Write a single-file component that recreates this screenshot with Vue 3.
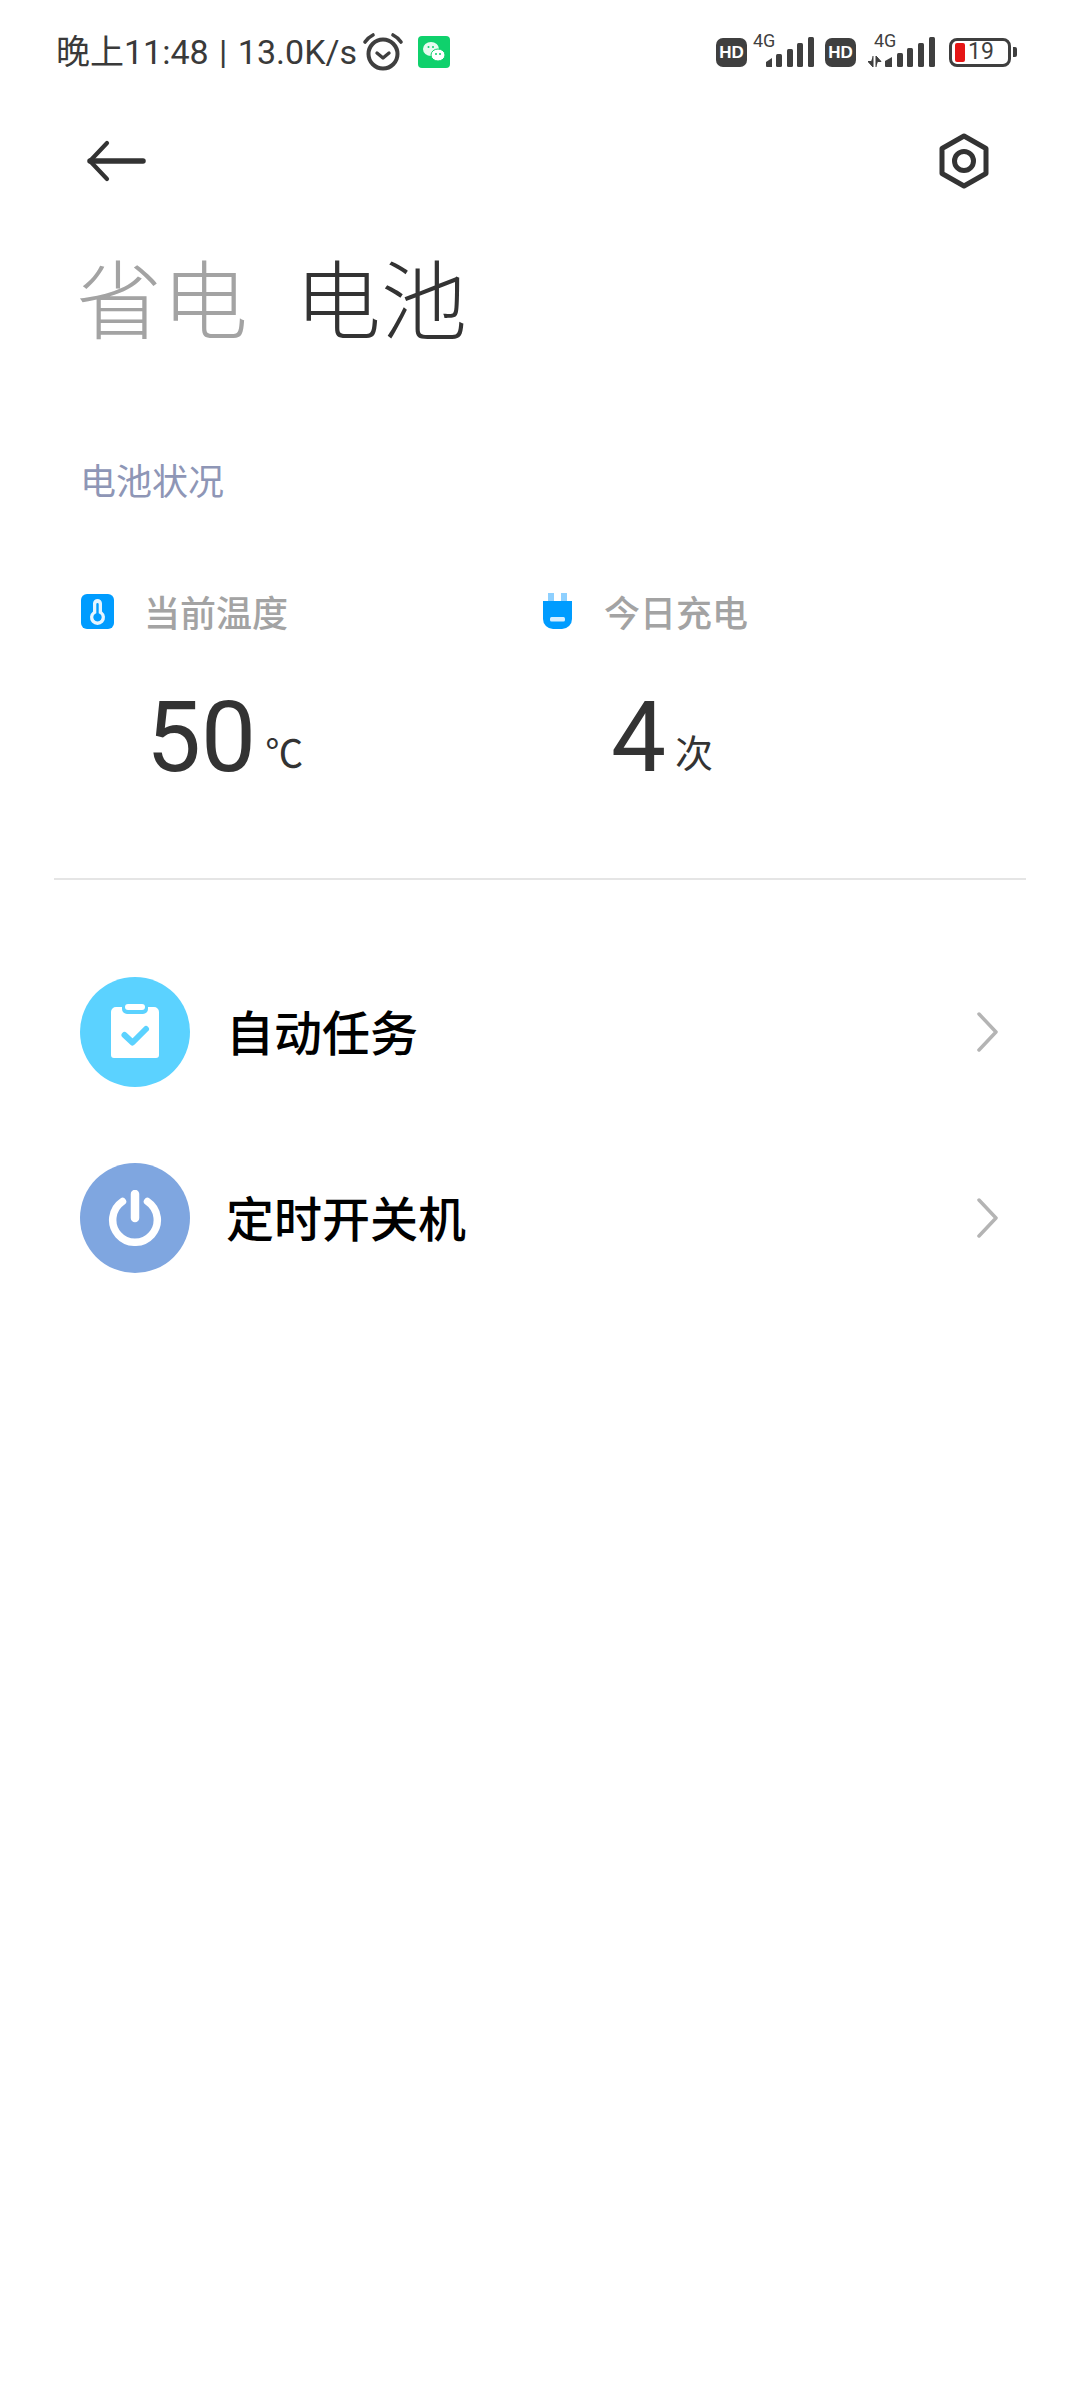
<script setup>
const stats = [
  { label: '当前温度', value: '50', unit: '℃', kind: 'temp' },
  { label: '今日充电', value: '4', unit: '次', kind: 'plug' }
]
const rows = [
  { label: '自动任务', kind: 'task' },
  { label: '定时开关机', kind: 'power' }
]
</script>

<template>
  <div class="page">
    <div class="status">
      <div class="status-left">
        <span class="clock">晚上11:48 | 13.0K/s</span>
        <svg class="alarm" width="42" height="40" viewBox="0 0 42 40" fill="none" stroke="#3f3f3f">
          <circle cx="21" cy="22" r="14.5" stroke-width="4" />
          <path d="M15 21l6 5 6-5" stroke-width="3.4" stroke-linecap="round" stroke-linejoin="round" />
          <path d="M3 10c2-3 4-5 8-7M39 10c-2-3-4-5-8-7" stroke-width="3.6" stroke-linecap="round" />
        </svg>
        <svg class="wechat" width="32" height="32" viewBox="0 0 32 32">
          <rect width="32" height="32" rx="4" fill="#0fd16c" />
          <ellipse cx="13" cy="13" rx="8" ry="7" fill="#fff" opacity=".9" />
          <ellipse cx="20" cy="19" rx="7" ry="6" fill="#fff" stroke="#0fd16c" stroke-width="1" />
          <circle cx="18" cy="18" r="1" fill="#0fd16c" />
          <circle cx="22" cy="18" r="1" fill="#0fd16c" />
          <circle cx="10.5" cy="11" r="1" fill="#0fd16c" />
          <circle cx="15" cy="11" r="1" fill="#0fd16c" />
        </svg>
      </div>
      <div class="status-right">
        <span class="hd">HD</span>
        <div class="sig sig-a">
          <span class="g4">4G</span>
          <svg width="48" height="30" viewBox="0 0 48 30" fill="#3f3f3f">
            <path d="M0 25l6-4v9H1a1 1 0 0 1-1-1z" />
            <rect x="10" y="17" width="6" height="13" rx="1.5" />
            <rect x="21" y="12" width="6" height="18" rx="1.5" />
            <rect x="31" y="6" width="6" height="24" rx="1.5" />
            <rect x="42" y="0" width="6" height="30" rx="1.5" />
          </svg>
        </div>
        <span class="hd hd2">HD</span>
        <div class="sig sig-b">
          <span class="g4 g4b">4G</span>
          <svg width="67" height="30" viewBox="0 0 67 30" fill="#3f3f3f">
            <path d="M5 19v11l-5-5.500h3M8 30V19l5 5.500h-3" stroke="#3f3f3f" stroke-width="1" />
            <path d="M17 24l7-4v10h-6a1 1 0 0 1-1-1z" />
            <rect x="29" y="16" width="6" height="14" rx="1.5" />
            <rect x="39" y="11" width="6" height="19" rx="1.5" />
            <rect x="50" y="6" width="6" height="24" rx="1.5" />
            <rect x="61" y="0" width="6" height="30" rx="1.5" />
          </svg>
        </div>
        <div class="battery">
          <div class="battery-body">
            <span class="battery-fill"></span>
            <span class="battery-num">19</span>
          </div>
          <span class="battery-nub"></span>
        </div>
      </div>
    </div>

    <div class="nav">
      <svg width="60" height="42" viewBox="0 0 60 42" fill="none" stroke="#333" stroke-linecap="round" stroke-linejoin="round">
        <path d="M4 21h53" stroke-width="5.500" />
        <path d="M21 3L4 21l17 18" stroke-width="4.200" />
      </svg>
      <svg width="52" height="56" viewBox="0 0 52 56" fill="none" stroke="#333">
        <path d="M26 3l22 12.500v25L26 53 4 40.500v-25z" stroke-width="5" stroke-linejoin="round" />
        <circle cx="26" cy="28" r="9.500" stroke-width="5" />
      </svg>
    </div>

    <div class="tabs">
      <span class="tab tab-off">省电</span>
      <span class="tab">电池</span>
    </div>

    <div class="section">电池状况</div>

    <div class="stats">
      <div v-for="s in stats" :key="s.label" class="stat">
        <div class="stat-head">
          <span class="stat-icon">
            <svg v-if="s.kind === 'temp'" width="33" height="35" viewBox="0 0 33 35">
              <rect width="33" height="35" rx="6" fill="#009cff" />
              <path d="M16.500 5a4.500 4.500 0 0 1 4.500 4.500v8a7.500 7.500 0 1 1-9 0v-8A4.500 4.500 0 0 1 16.500 5z" fill="#e6f5ff" />
              <path d="M16.500 9a1.200 1.200 0 0 1 1.200 1.200v9a4.200 4.200 0 1 1-2.400 0v-9A1.200 1.200 0 0 1 16.500 9z" fill="#009cff" />
            </svg>
            <svg v-else width="33" height="37" viewBox="0 0 33 37">
              <rect x="7" y="0" width="6" height="10" fill="#8ed0ff" />
              <rect x="20" y="0" width="6" height="10" fill="#8ed0ff" />
              <path d="M2 8h29v18a10 10 0 0 1-10 10h-9A10 10 0 0 1 2 26z" fill="#009cff" />
              <rect x="9" y="24" width="15" height="4.500" rx="1.500" fill="#d6eeff" />
            </svg>
          </span>
          <span class="stat-label">{{ s.label }}</span>
        </div>
        <div class="stat-value">
          <span class="num">{{ s.value }}</span>
          <span class="unit">{{ s.unit }}</span>
        </div>
      </div>
    </div>

    <div class="divider"></div>

    <div class="list">
      <div v-for="r in rows" :key="r.label" class="row">
        <span class="circle" :class="r.kind">
          <svg v-if="r.kind === 'task'" width="50" height="56" viewBox="0 0 50 56">
            <path d="M6 3h6v2a5 5 0 0 0 5 5h16a5 5 0 0 0 5-5V3h6a5 5 0 0 1 5 5v43a3 3 0 0 1-3 3H4a3 3 0 0 1-3-3V8a5 5 0 0 1 5-5z" fill="#fff" />
            <rect x="15" y="0" width="20" height="6" rx="3" fill="#fff" />
            <path d="M14.500 31l8 7.500L36 25" fill="none" stroke="#5bd2ff" stroke-width="6" stroke-linecap="round" stroke-linejoin="round" />
          </svg>
          <svg v-else width="56" height="56" viewBox="0 0 56 56" fill="none" stroke="#fff" stroke-linecap="round">
            <path d="M15.500 11.500a22.300 22.300 0 1 0 25 0" stroke-width="7.500" />
            <path d="M28 4v24" stroke-width="8.500" />
          </svg>
        </span>
        <span class="row-label">{{ r.label }}</span>
        <svg class="chev" width="22" height="40" viewBox="0 0 22 40" fill="none" stroke="#b4b4b4" stroke-width="3.500" stroke-linecap="round" stroke-linejoin="round">
          <path d="M3 2l17 18L3 38" />
        </svg>
      </div>
    </div>
  </div>
</template>

<style>
html, body { background: #fff; margin: 0; }
</style>

<style scoped>
.page {
  width: 1080px;
  height: 2400px;
  overflow: hidden;
  background: #fff;
  font-family: "Noto Sans CJK SC", Roboto, sans-serif;
  box-sizing: border-box;
}
.status {
  height: 60px;
  padding: 22px 63px 0 56px;
  display: flex;
  justify-content: space-between;
  align-items: center;
}
.status-left { display: flex; align-items: center; }
.clock {
  font-family: Roboto, "Noto Sans CJK SC", sans-serif;
  font-size: 34px;
  line-height: 60px;
  color: #3a3a3a;
  white-space: nowrap;
  word-spacing: 2px;
}
.alarm { margin-left: 5px; }
.wechat { margin-left: 14px; }
.status-right { display: flex; align-items: center; }
.hd {
  width: 31px;
  height: 29px;
  border-radius: 7px;
  background: #3f3f3f;
  color: #fff;
  font: 900 17px/29px "Liberation Sans", sans-serif;
  text-align: center;
}
.hd2 { margin-left: 11px; }
.sig { position: relative; height: 30px; display: flex; }
.sig-a { margin-left: 19px; }
.sig-b { margin-left: 12px; }
.g4 {
  position: absolute;
  left: -13px;
  top: -5px;
  font: 18px/18px Roboto, sans-serif;
  color: #3f3f3f;
}
.g4b { left: 6px; }
.battery { display: flex; align-items: center; margin-left: 14px; }
.battery-body {
  width: 62px;
  height: 29px;
  box-sizing: border-box;
  border: 3.500px solid #3f3f3f;
  border-radius: 8px;
  display: flex;
  align-items: center;
  padding-left: 3px;
}
.battery-fill { width: 10px; height: 19px; background: #e51515; border-radius: 2px; flex: none; }
.battery-num { font: 23px/22px Roboto, sans-serif; color: #3f3f3f; margin-left: 3px; }
.battery-nub { width: 4px; height: 10px; background: #3f3f3f; border-radius: 0 2px 2px 0; margin-left: 2px; }

.nav {
  margin-top: 47px;
  height: 64px;
  padding: 0 90px 0 86px;
  display: flex;
  justify-content: space-between;
  align-items: center;
}
.tabs {
  margin-top: 48px;
  padding-left: 76px;
  display: flex;
  gap: 47px;
  height: 110px;
  align-items: center;
}
.tab {
  font-size: 86px;
  line-height: 110px;
  font-weight: 300;
  color: #333;
}
.tab-off { color: #a3a3a3; }
.section {
  margin-top: 103px;
  padding-left: 80px;
  font-size: 36px;
  line-height: 50px;
  color: #8e96b6;
}
.stats {
  margin-top: 85px;
  padding-left: 81px;
  display: grid;
  grid-template-columns: 460px 1fr;
}
.stat-head { display: flex; align-items: center; height: 44px; }
.stat-icon { width: 63px; display: flex; }
.stat-label { font-size: 36px; line-height: 44px; font-weight: 500; color: #a3a3a3; }
.stat-value { margin-top: 45px; padding-left: 65px; height: 120px; white-space: nowrap; }
.stat:nth-child(2) .stat-value { padding-left: 70px; }
.num {
  font-family: Roboto, sans-serif;
  font-size: 98px;
  line-height: 120px;
  color: #333;
}
.unit {
  font-size: 38px;
  line-height: 40px;
  color: #333;
  margin-left: 9px;
  vertical-align: 4px;
}
.divider { margin: 80px 54px 0; height: 2px; background: #e5e5e5; }
.list { margin-top: 59px; display: flex; flex-direction: column; }
.row {
  height: 186px;
  padding: 0 82px 0 80px;
  display: flex;
  align-items: center;
}
.circle {
  width: 110px;
  height: 110px;
  border-radius: 50%;
  display: flex;
  align-items: center;
  justify-content: center;
  flex: none;
}
.task { background: #5bd2ff; }
.power { background: #7fa6e0; }
.row-label {
  margin-left: 36px;
  padding-bottom: 4px;
  font-size: 48px;
  font-weight: 500;
  color: #000;
  flex: 1;
}
</style>
